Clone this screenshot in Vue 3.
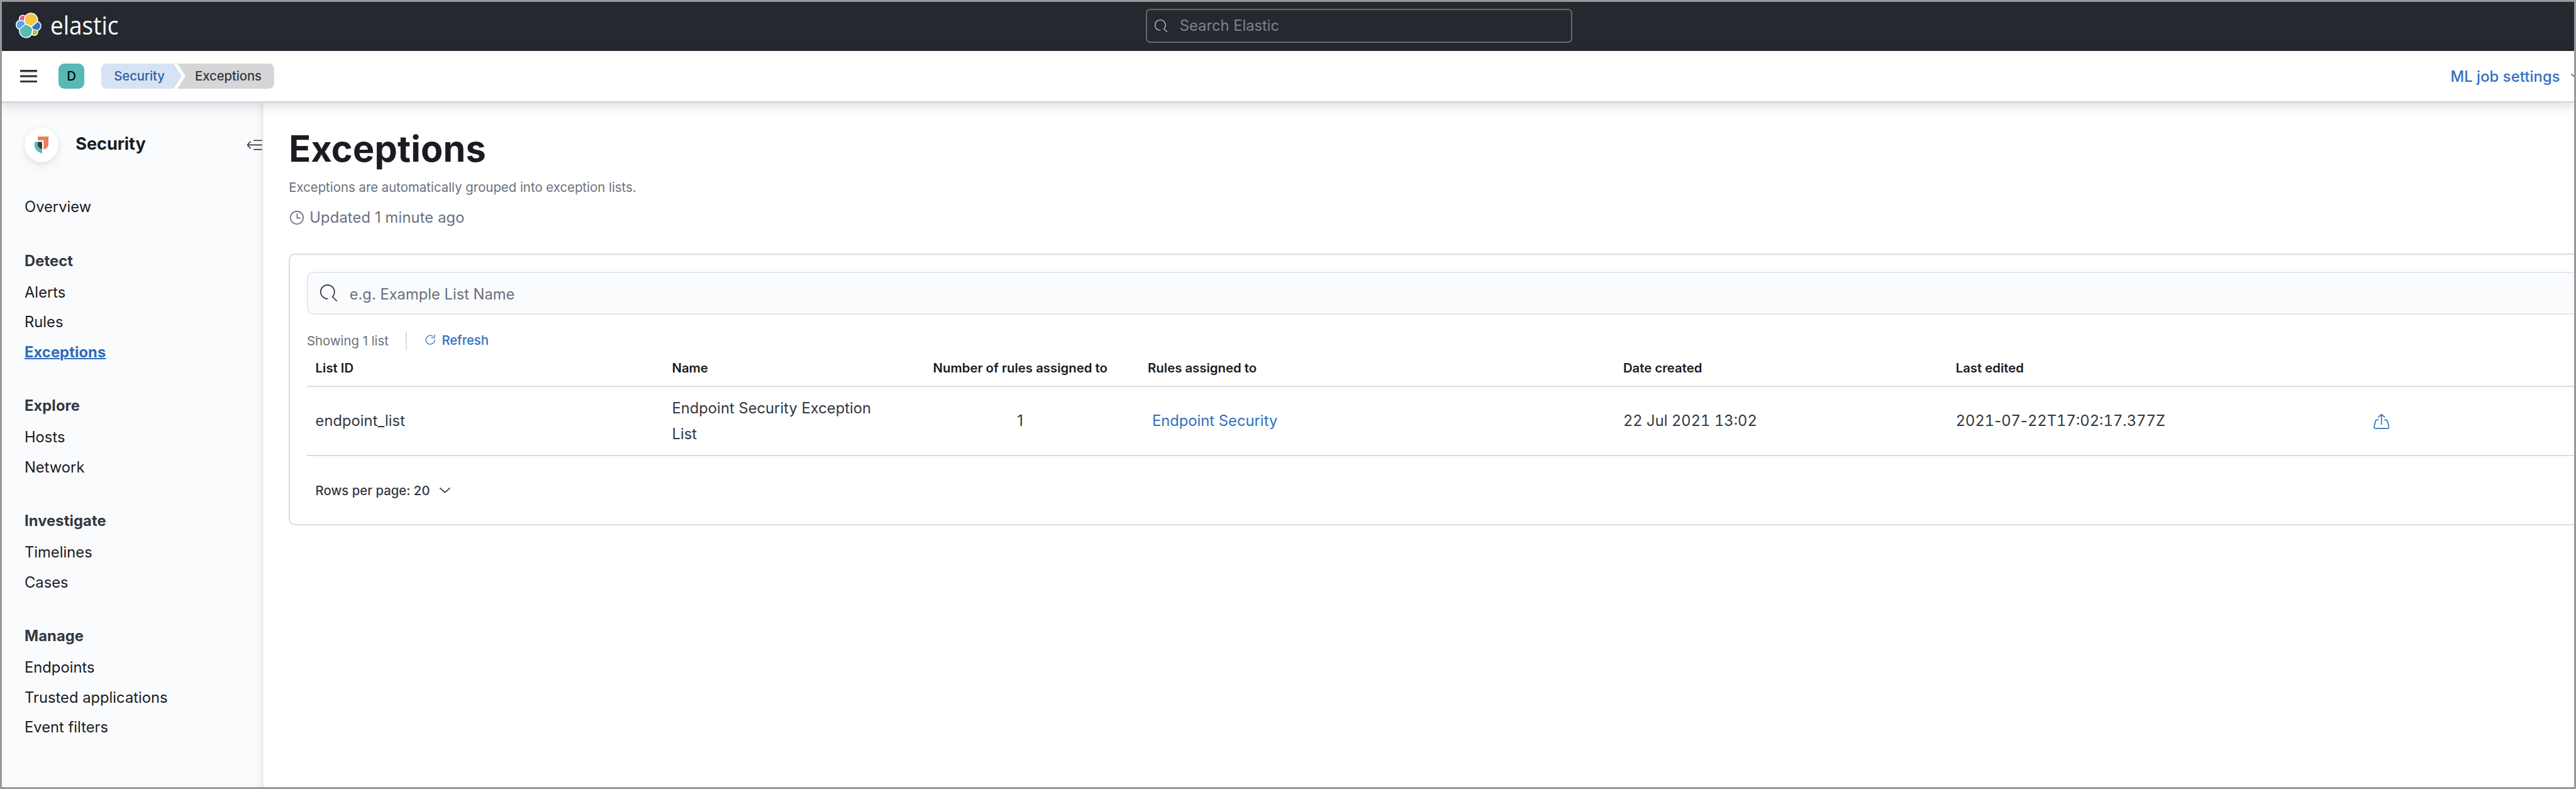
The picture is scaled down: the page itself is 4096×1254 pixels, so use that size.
<script setup>
const groups = [
  { items: ['Overview'] },
  { title: 'Detect', items: ['Alerts', 'Rules', 'Exceptions'] },
  { title: 'Explore', items: ['Hosts', 'Network'] },
  { title: 'Investigate', items: ['Timelines', 'Cases'] },
  { title: 'Manage', items: ['Endpoints', 'Trusted applications', 'Event filters'] },
]
const searchPath =
  'M11.271 11.978l3.872 3.873a.502.502 0 00.708 0 .502.502 0 000-.708l-3.565-3.564c2.38-2.747 2.267-6.923-.342-9.532-2.73-2.73-7.17-2.73-9.898 0-2.728 2.729-2.728 7.17 0 9.9a6.955 6.955 0 004.949 2.05.5.5 0 000-1 5.96 5.96 0 01-4.242-1.757 6.01 6.01 0 010-8.486 6.01 6.01 0 018.486 0 6.01 6.01 0 010 8.486.5.5 0 00.034.738z'
const logo = [
  { fill: '#f4c546', d: 'M12.58 13.787l7.002 3.211 7.066-6.213a7.849 7.849 0 00.152-1.557c0-4.287-3.464-7.775-7.722-7.775a7.706 7.706 0 00-6.38 3.386l-1.176 6.126 1.058 2.822z' },
  { fill: '#57bab3', d: 'M5.333 21.228c-.1.5-.15 1.04-.15 1.58 0 4.306 3.477 7.81 7.751 7.81a7.73 7.73 0 006.4-3.405l1.162-6.097-1.555-2.979-7.03-3.215-6.578 6.306z' },
  { fill: '#e05c9b', d: 'M5.288 9.067l4.8 1.137 1.05-5.479a3.805 3.805 0 00-2.309-.786 3.805 3.805 0 00-3.8 3.81c0 .457.08.9.26 1.318z' },
  { fill: '#52a6ef', d: 'M4.872 10.218C2.728 10.934 1.23 13.004 1.23 15.274a5.349 5.349 0 003.419 4.983l6.733-6.12-1.237-2.655-5.273-1.264z' },
  { fill: '#a0c93f', d: 'M20.873 27.198a3.819 3.819 0 002.303.793c2.1 0 3.806-1.711 3.806-3.817 0-.463-.08-.906-.242-1.318l-4.796-1.128-1.07 5.47z' },
  { fill: '#3275c9', d: 'M21.848 20.563l5.28 1.243c2.145-.712 3.643-2.781 3.643-5.053a5.336 5.336 0 00-3.407-4.965l-6.905 6.077 1.389 2.698z' },
]
</script>

<template>
  <div class="app">
    <header class="topbar">
      <svg class="logo" viewBox="0 0 32 32">
        <g fill="#fff" stroke="#fff" stroke-width="2.4" stroke-linejoin="round">
          <path v-for="p in logo" :key="p.fill" :d="p.d" />
        </g>
        <path v-for="p in logo" :key="p.fill" :d="p.d" :fill="p.fill" />
      </svg>
      <svg class="wordmark" viewBox="0 0 130 50">
        <text x="0" y="42" textLength="128" lengthAdjust="spacingAndGlyphs">elastic</text>
      </svg>
      <div class="global-search">
        <svg class="icon-24" viewBox="0 0 16 16"><path fill="#c4c5c8" :d="searchPath" /></svg>
        <span>Search Elastic</span>
      </div>
    </header>

    <nav class="crumbbar">
      <svg class="burger" viewBox="0 0 32 24">
        <path fill="#343741" d="M0 0h32v4H0zM0 10h32v4H0zM0 20h32v4H0z" />
      </svg>
      <span class="space">D</span>
      <span class="crumb first">Security</span>
      <span class="crumb last">Exceptions</span>
      <span class="ml">ML job settings</span>
      <svg class="chev ml-chev" viewBox="0 0 20 10"><path d="M1 1l9 8 9-8" /></svg>
    </nav>

    <div class="body">
      <aside class="sidebar">
        <div class="side-head">
          <span class="app-icon">
            <svg viewBox="0 0 26 32">
              <path fill="#ec7d5b" d="M6 0h20v15.500c0 4-3.500 7.500-9 9V7H6z" />
              <path fill="#343741" d="M6 10h8v14c-5-1.500-8-4.500-8-8z" />
              <path fill="#57b9b2" d="M0 10h6v6c0 3.500 3 6.500 8 8v8C5 29 0 23 0 17.500z" />
            </svg>
          </span>
          <span class="side-title">Security</span>
          <svg class="collapse" viewBox="0 0 28 20">
            <path d="M12 1.500h16M1 10h27M12 18.500h16M6.500 3.500L1.500 8.500q-1 1.500 0 3l5 5" />
          </svg>
        </div>
        <section v-for="(g, i) in groups" :key="i" class="group">
          <h3 v-if="g.title">{{ g.title }}</h3>
          <a v-for="t in g.items" :key="t" :class="{ active: t === 'Exceptions' }"><span>{{ t }}</span></a>
        </section>
      </aside>

      <main class="main">
        <h1>Exceptions</h1>
        <p class="sub">Exceptions are automatically grouped into exception lists.</p>
        <p class="updated">
          <svg class="clock" viewBox="0 0 26 26">
            <circle cx="13" cy="13" r="12" /><path d="M13.500 5v8.800H20" />
          </svg>
          <span>Updated 1 minute ago</span>
        </p>

        <section class="panel">
          <div class="search">
            <svg class="icon-32" viewBox="0 0 16 16"><path fill="#343741" :d="searchPath" /></svg>
            <span>e.g. Example List Name</span>
          </div>
          <div class="util">
            <span class="count">Showing 1 list</span>
            <span class="refresh">
              <svg class="icon-24" viewBox="0 0 16 16">
                <path fill="#2f70c0" d="M11.228 2.942a.5.5 0 11-.538.842A5 5 0 1013 8a.5.5 0 111 0 6 6 0 11-2.772-5.058zM14 1.500v3A1.500 1.500 0 0112.500 6h-3a.5.5 0 010-1h3a.5.5 0 00.5-.5v-3a.5.5 0 111 0z" />
              </svg>
              <span>Refresh</span>
            </span>
          </div>
          <div class="row head">
            <span>List ID</span>
            <span>Name</span>
            <span class="center">Number of rules assigned to</span>
            <span>Rules assigned to</span>
            <span>Date created</span>
            <span>Last edited</span>
            <span></span>
          </div>
          <div class="row data">
            <span>endpoint_list</span>
            <span>Endpoint Security Exception List</span>
            <span class="center">1</span>
            <span class="link">Endpoint Security</span>
            <span class="date">22 Jul 2021 13:02</span>
            <span class="date">2021<i>-</i>07<i>-</i>22T17:02:17.377Z</span>
            <span class="action">
              <svg class="export" viewBox="0 0 30 28">
                <path d="M15 20V1.500M8.500 6.500L13.500 1.800q1.500-1.500 3 0L21.500 6.500M9.500 11H6.500q-2 0-2.600 2L1.200 23.500q-.7 3.500 2.300 3.500h23q3 0 2.300-3.500L26.100 13q-.6-2-2.600-2h-3" />
              </svg>
            </span>
          </div>
          <div class="pager">
            <span>Rows per page: 20</span>
            <svg class="chev" viewBox="0 0 20 10"><path d="M1 1l9 8 9-8" /></svg>
          </div>
        </section>
      </main>
    </div>
  </div>
</template>

<style>
html {
  font-size: 8.47332px;
}
body {
  margin: 0;
}
</style>

<style scoped>
.app {
  position: relative;
  width: 4096px;
  height: 1254px;
  overflow: hidden;
  display: flex;
  flex-direction: column;
  background: #fff;
  color: #343741;
  font-family: Inter, 'Liberation Sans', sans-serif;
  font-size: 2.8rem;
  line-height: 5.6rem;
  white-space: nowrap;
}
.app * {
  box-sizing: border-box;
}
.app::after {
  content: '';
  position: absolute;
  z-index: 2;
  inset: 0;
  border: 3px solid #9a9998;
}
svg {
  display: block;
  flex: none;
}
h1,
h3,
p {
  margin: 0;
}
.icon-24 {
  width: 2.4rem;
  height: 2.4rem;
}
.icon-32 {
  width: 3.2rem;
  height: 3.2rem;
}

.topbar {
  flex: none;
  height: 9.6rem;
  display: flex;
  align-items: center;
  padding-left: 3rem;
  background: #25282f;
}
.logo {
  width: 4.8rem;
  height: 4.8rem;
}
.wordmark {
  width: 13rem;
  height: 5rem;
  margin-left: 1.6rem;
  overflow: visible;
}
.wordmark text {
  fill: #fff;
  font-family: 'Open Sans', sans-serif;
  font-size: 47px;
}
.global-search {
  width: 80rem;
  height: 6.4rem;
  margin-left: 192.6rem;
  padding-left: 1.4rem;
  display: flex;
  align-items: center;
  gap: 2.35rem;
  border: 2px solid #69696d;
  border-radius: 0.8rem;
  color: #808185;
}

.crumbbar {
  position: relative;
  z-index: 1;
  flex: none;
  height: 9.6rem;
  padding: 0 0 0 3.8rem;
  display: flex;
  align-items: center;
  background: #fff;
  border-bottom: 2px solid #cfd4e2;
  box-shadow: 0 0.4rem 2.4rem rgba(0, 0, 0, 0.17);
  font-weight: 500;
}
.burger {
  width: 3.2rem;
  height: 2.4rem;
}
.space {
  width: 4.8rem;
  height: 4.8rem;
  margin-left: 4rem;
  line-height: 4.8rem;
  text-align: center;
  border-radius: 1.1rem;
  background: #57b9b3;
  color: #000;
  font-size: 2.4rem;
}
.crumb {
  height: 4.7rem;
  line-height: 4.8rem;
  font-size: 2.4rem;
  letter-spacing: -0.005em;
}
.crumb.first {
  width: 15.1rem;
  margin-left: 3.2rem;
  padding-left: 2.4rem;
  background: #d6e3f5;
  color: #2862a6;
  border-radius: 1rem 0 0 1rem;
  clip-path: polygon(0 0, 13.6rem 0, 100% 50%, 13.6rem 100%, 0 100%);
}
.crumb.last {
  width: 18.2rem;
  margin-left: -0.8rem;
  padding-left: 3.3rem;
  background: #d6d6d8;
  border-radius: 0 1rem 1rem 0;
  clip-path: polygon(0 0, 100% 0, 100% 100%, 0 100%, 1.5rem 50%);
}
.ml {
  margin-left: auto;
  margin-right: 2rem;
  padding-top: 1px;
  color: #2f70c0;
  letter-spacing: 0.0045em;
}
.chev {
  width: 2rem;
  height: 1rem;
}
.chev path {
  fill: none;
  stroke: #343741;
  stroke-width: 2;
  stroke-linecap: round;
  stroke-linejoin: round;
}
.ml-chev {
  margin-right: -1rem;
}
.ml-chev path {
  stroke: #2f70c0;
}

.body {
  flex: 1;
  min-height: 0;
  display: flex;
}
.sidebar {
  flex: none;
  width: 49.4rem;
  padding: 4.8rem 0 0 4.6rem;
  background: linear-gradient(to right, rgba(0, 0, 0, 0), rgba(0, 0, 0, 0.015) 60%, rgba(0, 0, 0, 0.07)) right / 2.2rem 100% no-repeat #fafbfd;
}
.side-head {
  height: 6.4rem;
  margin-bottom: 5.64rem;
  display: flex;
  align-items: center;
}
.app-icon {
  width: 6.4rem;
  height: 6.4rem;
  display: flex;
  align-items: center;
  justify-content: center;
  border-radius: 50%;
  background: #fff;
  box-shadow: 0 0.2rem 0.8rem rgba(0, 0, 0, 0.08), 0 0.8rem 2rem rgba(0, 0, 0, 0.06);
}
.app-icon svg {
  width: 2.6rem;
  height: 3.2rem;
}
.side-title {
  margin: -0.5rem auto 0 3.2rem;
  color: #1a1c21;
  font-size: 3.2rem;
  font-weight: 700;
  letter-spacing: -0.003em;
}
.collapse {
  width: 2.8rem;
  height: 2rem;
  margin-right: 0.2rem;
}
.collapse path {
  fill: none;
  stroke: #343741;
  stroke-width: 2;
}
.group {
  margin-bottom: 4rem;
}
.group h3 {
  height: 6.4rem;
  line-height: 6.5rem;
  font-size: 2.8rem;
  font-weight: 700;
  letter-spacing: 0.004em;
}
.group a {
  display: block;
  height: 5.6rem;
  color: #1a1c21;
  letter-spacing: 0.001em;
}
.group a.active {
  color: #2f6bb8;
  font-weight: 700;
  letter-spacing: 0.004em;
  text-decoration: underline;
  text-decoration-thickness: 2px;
}

.main {
  flex: 1;
  min-width: 0;
  padding-left: 4.8rem;
  display: flex;
  flex-direction: column;
}
h1 {
  height: 8rem;
  margin-top: 4.75rem;
  line-height: 8rem;
  color: #1a1c21;
  font-size: 6.8rem;
  font-weight: 700;
  letter-spacing: 0.003em;
}
.sub {
  height: 4rem;
  margin-top: 1.2rem;
  line-height: 4rem;
  color: #69707d;
  font-size: 2.4rem;
  letter-spacing: 0.001em;
}
.updated {
  height: 4rem;
  margin-top: 1.65rem;
  display: flex;
  align-items: center;
  gap: 1.1rem;
  color: #69707d;
  letter-spacing: 0.006em;
}
.clock {
  width: 2.6rem;
  height: 2.6rem;
  margin-left: 0.2rem;
}
.clock * {
  fill: none;
  stroke: #69707d;
  stroke-width: 2;
}
.panel {
  height: 51rem;
  margin-top: 4.8rem;
  padding: calc(3.4rem - 2px) 0 0 calc(3.4rem - 2px);
  border: 2px solid #d9dce9;
  border-right: 0;
  border-radius: 1.2rem 0 0 1.2rem;
}
.search {
  height: 8rem;
  padding-left: 2.2rem;
  display: flex;
  align-items: center;
  gap: 2.35rem;
  border: 2px solid #e4e7f1;
  border-right: 0;
  border-radius: 1.2rem 0 0 1.2rem;
  background: #fafbfd;
  color: #69707d;
}
.search span {
  padding-top: 0.5rem;
}
.util {
  height: 3.6rem;
  margin-top: 3.2rem;
  display: flex;
  font-size: 2.4rem;
}
.count {
  width: 18.8rem;
  line-height: 3.5rem;
  border-right: 2px solid #d9dce9;
  color: #69707d;
}
.refresh {
  height: 3.2rem;
  margin-left: 3.2rem;
  display: flex;
  align-items: center;
  gap: 0.9rem;
  color: #2f70c0;
  font-weight: 500;
  letter-spacing: -0.005em;
}
.row {
  display: grid;
  grid-template-columns: 66.9rem 44.6rem 44.7rem 89.2rem 62.4rem 78.4rem 1fr;
  align-items: center;
  border-bottom: 2px solid #d9dce9;
}
.row > span {
  padding: 0 1.6rem;
}
.row > .center {
  text-align: center;
}
.head {
  height: 6.8rem;
  padding-bottom: 0.1rem;
  color: #1a1c21;
  font-size: 2.4rem;
  font-weight: 600;
}
.data {
  height: 13rem;
  padding-top: 1px;
  line-height: 4.8rem;
  white-space: normal;
  letter-spacing: 0.001em;
}
.row > .link {
  padding-left: 2.4rem;
  color: #2f70c0;
}
.date {
  font-feature-settings: 'tnum' 1, 'calt' 1;
}
.date i {
  font-style: normal;
  font-feature-settings: 'tnum' 0;
}
.export {
  width: 3rem;
  height: 2.8rem;
}
.export path {
  fill: none;
  stroke: #2f70c0;
  stroke-width: 2;
}
.pager {
  height: 12.8rem;
  padding-left: 1.6rem;
  display: flex;
  align-items: center;
  gap: 1.8rem;
  font-size: 2.4rem;
  font-weight: 500;
}
</style>
